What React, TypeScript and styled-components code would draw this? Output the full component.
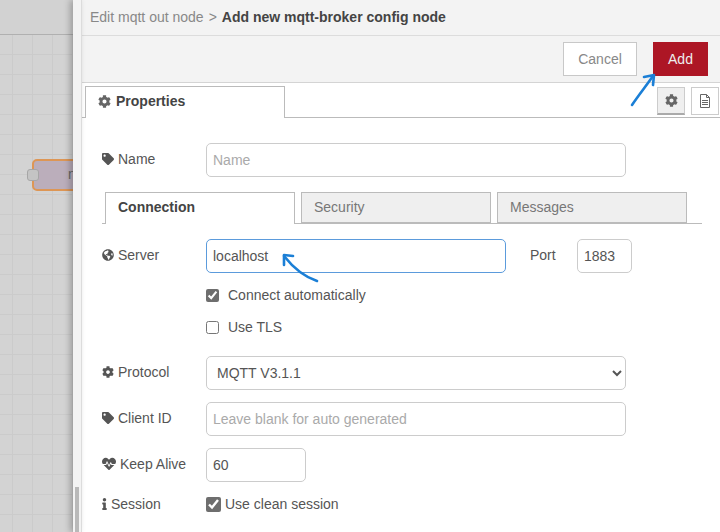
import React from "react";
import styled, { createGlobalStyle } from "styled-components";
import { FaCog, FaTag, FaGlobeAmericas, FaHeartbeat, FaInfo } from "react-icons/fa";

const Global = createGlobalStyle`
  html, body { margin: 0; padding: 0; width: 720px; height: 532px; overflow: hidden; }
  body { font-family: "Liberation Sans", Arial, sans-serif; font-size: 14px; color: #555; }
  * { box-sizing: border-box; }
`;

const Page = styled.div`
  position: relative;
  display: flex;
  width: 720px;
  height: 532px;
  overflow: hidden;
  background: #fff;
`;

const Canvas = styled.div`
  position: relative;
  flex: 0 0 73px;
  display: flex;
  flex-direction: column;
  overflow: hidden;
  background: #d3d3d3;
`;

const CanvasHeader = styled.div`
  flex: 0 0 35px;
  background: #d2d2d2;
  border-bottom: 1px solid #b0b0b0;
`;

const Grid = styled.div`
  flex: 1;
  background-color: #d3d3d3;
  background-image:
    linear-gradient(#cbcbcb 1px, transparent 1px),
    linear-gradient(90deg, #cbcbcb 1px, transparent 1px);
  background-size: 20px 20px;
  background-position: 12px 19px;
`;

const Node = styled.div`
  position: absolute;
  left: 32px;
  top: 159px;
  width: 80px;
  height: 32px;
  border: 2px solid #dd9655;
  border-radius: 5px;
  background: #bbaebb;
  color: #666;
  padding: 5px 0 0 34px;
  font-size: 14px;
`;

const Port = styled.div`
  position: absolute;
  left: 27px;
  top: 169px;
  width: 12px;
  height: 12px;
  border: 1px solid #a6a6a6;
  border-radius: 3px;
  background: #c4c4c4;
`;

const Edge = styled.div`
  position: relative;
  flex: 0 0 9px;
  background: #f3f3f3;
  border-right: 1px solid #dcdcdc;
  box-shadow: -3px 0 6px rgba(0, 0, 0, 0.25);
`;

const ScrollThumb = styled.div`
  position: absolute;
  left: 2px;
  top: 487px;
  width: 4px;
  height: 45px;
  background: #b9b9b9;
`;

const Panel = styled.div`
  flex: 1;
  display: flex;
  flex-direction: column;
  min-width: 0;
`;

const TitleBar = styled.div`
  height: 36px;
  background: #f3f3f3;
  border-bottom: 1px solid #dcdcdc;
  padding: 9px 0 0 8px;
  line-height: 16px;
  color: #888;
  font-size: 14px;
  white-space: nowrap;
`;

const Sep = styled.span`
  margin: 0 5px;
`;

const Strong = styled.b`
  color: #444;
`;

const Toolbar = styled.div`
  height: 47px;
  background: #f3f3f3;
  border-bottom: 1px solid #d4d4d4;
  display: flex;
  justify-content: flex-end;
  align-items: flex-start;
  gap: 16px;
  padding: 6px 12px 0 0;
`;

const Btn = styled.button<{ $primary?: boolean }>`
  height: 34px;
  width: ${(p) => (p.$primary ? "55px" : "74px")};
  border: 1px solid ${(p) => (p.$primary ? "#ad1625" : "#c8c8c8")};
  background: ${(p) => (p.$primary ? "#ad1625" : "#fff")};
  color: ${(p) => (p.$primary ? "#eee" : "#888")};
  font: 14px "Liberation Sans", Arial, sans-serif;
  padding: 0;
`;

const TabBar = styled.div`
  height: 35px;
  display: flex;
  align-items: flex-start;
  justify-content: space-between;
  padding: 3px 1px 0 3px;
  border-bottom: 1px solid #bbb;
`;

const MainTab = styled.div`
  width: 200px;
  height: 32px;
  margin-bottom: -1px;
  background: #fff;
  border: 1px solid #bbb;
  border-bottom: none;
  padding: 6px 0 0 12px;
  display: flex;
  align-items: flex-start;
  gap: 5px;
  line-height: 16px;
  font-weight: bold;
  color: #444;
  svg { color: #666; margin-top: 2px; }
`;

const SideTabs = styled.div`
  display: flex;
  gap: 6px;
  padding-top: 1px;
`;

const SideBtn = styled.div<{ $active?: boolean }>`
  width: 28px;
  height: 28px;
  display: flex;
  align-items: center;
  justify-content: center;
  border: 1px solid #ccc;
  border-bottom: ${(p) => (p.$active ? "2px solid #aaa" : "1px solid #ccc")};
  background: ${(p) => (p.$active ? "#efefef" : "#fff")};
  color: #666;
`;

const DocIcon = styled.svg`
  fill: none;
  stroke: #666;
  stroke-width: 1;
`;

const Form = styled.div`
  padding: 25px 0 0 20px;
  display: flex;
  flex-direction: column;
`;

const Row = styled.div<{ $mt?: number }>`
  display: flex;
  align-items: flex-start;
  margin-top: ${(p) => p.$mt ?? 0}px;
`;

const Label = styled.label`
  flex: 0 0 104px;
  display: flex;
  align-items: center;
  gap: 4px;
  height: 16px;
  margin-top: 8px;
  color: #555;
  line-height: 16px;
  white-space: nowrap;
  svg { color: #555; }
`;

const Field = styled.input<{ $w: number; $focus?: boolean }>`
  width: ${(p) => p.$w}px;
  height: 34px;
  padding: 0 6px;
  border: 1px solid ${(p) => (p.$focus ? "#5b9bdc" : "#ccc")};
  border-radius: 5px;
  background: #fff;
  color: #555;
  font: 14px "Liberation Sans", Arial, sans-serif;
  outline: none;
  &::placeholder { color: #aaa; opacity: 1; }
`;

const Select = styled.select`
  width: 420px;
  height: 34px;
  padding: 0 6px;
  border: 1px solid #ccc;
  border-radius: 5px;
  background: #fff;
  color: #555;
  font: 14px "Liberation Sans", Arial, sans-serif;
  outline: none;
`;

const SubTabs = styled.div`
  display: flex;
  gap: 6px;
  width: 600px;
  height: 32px;
  margin-top: 15px;
  padding-left: 3px;
  border-bottom: 1px solid #bbb;
`;

const SubTab = styled.div<{ $active?: boolean }>`
  width: 190px;
  height: ${(p) => (p.$active ? "32px" : "31px")};
  border: 1px solid #bbb;
  border-bottom: ${(p) => (p.$active ? "none" : "1px solid #bbb")};
  background: ${(p) => (p.$active ? "#fff" : "#efefef")};
  color: ${(p) => (p.$active ? "#444" : "#777")};
  font-weight: ${(p) => (p.$active ? "bold" : "normal")};
  padding: 6px 0 0 12px;
  line-height: 16px;
`;

const PortLabel = styled.span`
  margin: 8px 0 0 24px;
  width: 47px;
  line-height: 16px;
`;

const CheckRow = styled.label<{ $mt: number }>`
  display: flex;
  align-items: center;
  gap: 9px;
  height: 16px;
  margin-top: ${(p) => p.$mt}px;
  margin-left: 104px;
  color: #555;
  line-height: 16px;
`;

const Check = styled.input.attrs({ type: "checkbox" })<{ $size?: number }>`
  width: ${(p) => p.$size ?? 13}px;
  height: ${(p) => p.$size ?? 13}px;
  margin: 0;
  accent-color: #6e6e6e;
`;

const SessionRow = styled.div`
  display: flex;
  align-items: center;
  height: 16px;
  margin-top: 14px;
`;

const SessionLabel = styled.span`
  flex: 0 0 104px;
  display: flex;
  align-items: center;
  gap: 4px;
  svg { color: #555; width: 5px; }
`;

const SessionCheck = styled.label`
  display: flex;
  align-items: center;
  gap: 4px;
`;

const Arrow = styled.svg`
  position: absolute;
  left: 0;
  top: 0;
  overflow: visible;
  fill: none;
  stroke: #1b7fd6;
  stroke-width: 2.6;
  stroke-linecap: round;
  stroke-linejoin: round;
`;

export default function App() {
  return (
    <Page>
      <Global />
      <Canvas>
        <CanvasHeader />
        <Grid />
        <Node>n</Node>
        <Port />
      </Canvas>
      <Edge><ScrollThumb /></Edge>
      <Panel>
        <TitleBar>Edit mqtt out node<Sep>&gt;</Sep><Strong>Add new mqtt-broker config node</Strong></TitleBar>
        <Toolbar>
          <Btn>Cancel</Btn>
          <Btn $primary>Add</Btn>
        </Toolbar>
        <TabBar>
          <MainTab><FaCog size={13} />Properties</MainTab>
          <SideTabs>
            <SideBtn $active><FaCog size={13} /></SideBtn>
            <SideBtn>
              <DocIcon width="12" height="14" viewBox="0 0 12 14">
                <path d="M1.5.5h6l3 3v10h-9z" />
                <path d="M7.5.5v3h3M3 6.5h6M3 8.5h6M3 10.5h6" />
              </DocIcon>
            </SideBtn>
          </SideTabs>
        </TabBar>
        <Form>
          <Row>
            <Label><FaTag size={12} />Name</Label>
            <Field $w={420} placeholder="Name" />
          </Row>
          <SubTabs>
            <SubTab $active>Connection</SubTab>
            <SubTab>Security</SubTab>
            <SubTab>Messages</SubTab>
          </SubTabs>
          <Row $mt={15}>
            <Label><FaGlobeAmericas size={12} />Server</Label>
            <Field $w={300} $focus defaultValue="localhost" />
            <PortLabel>Port</PortLabel>
            <Field $w={55} defaultValue="1883" />
          </Row>
          <CheckRow $mt={14}><Check defaultChecked />Connect automatically</CheckRow>
          <CheckRow $mt={16}><Check />Use TLS</CheckRow>
          <Row $mt={21}>
            <Label><FaCog size={12} />Protocol</Label>
            <Select defaultValue="3.1.1"><option value="3.1.1">MQTT V3.1.1</option></Select>
          </Row>
          <Row $mt={12}>
            <Label><FaTag size={12} />Client ID</Label>
            <Field $w={420} placeholder="Leave blank for auto generated" />
          </Row>
          <Row $mt={12}>
            <Label><FaHeartbeat size={14} />Keep Alive</Label>
            <Field $w={100} defaultValue="60" />
          </Row>
          <SessionRow>
            <SessionLabel><FaInfo size={12} />Session</SessionLabel>
            <SessionCheck><Check $size={15} defaultChecked />Use clean session</SessionCheck>
          </SessionRow>
        </Form>
      </Panel>
      <Arrow width="720" height="532" viewBox="0 0 720 532">
        <path d="M632 105 C638 96 646 86 653 76" />
        <path d="M644 77 L654 75 L653 85" />
        <path d="M317 281 C305 277 295 270 284 256" />
        <path d="M284 265 L284 255 L293 256" />
      </Arrow>
    </Page>
  );
}
